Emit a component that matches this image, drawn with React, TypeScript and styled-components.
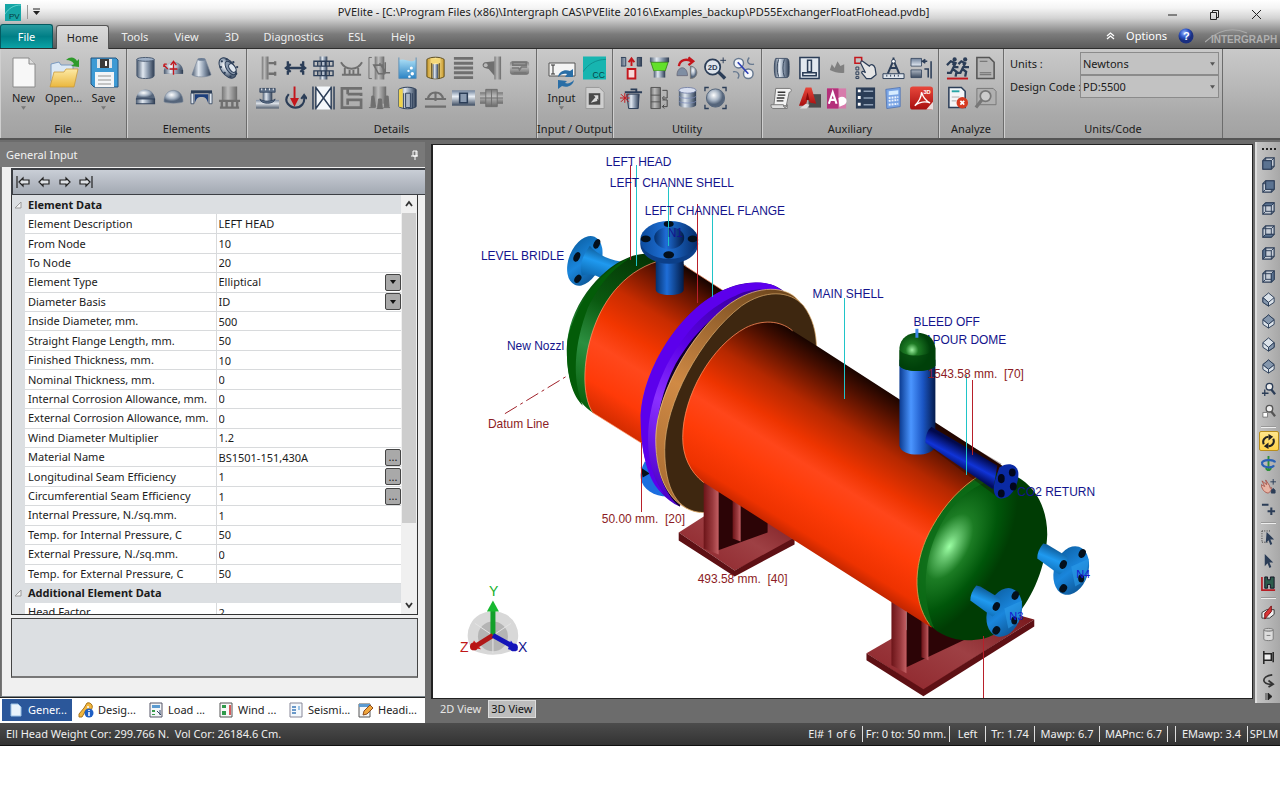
import React from "react";
import styled, { createGlobalStyle } from "styled-components";

const GlobalStyle = createGlobalStyle`
  * { box-sizing: border-box; }
  body { margin: 0; background: #fff; }
  body, button, input, select { font-family: "Noto Sans", "Open Sans", sans-serif; font-size: 11px; line-height: 16px; }
  button { padding: 0; border: 0; background: none; color: inherit; }
`;

const Window = styled.div`
  display: flex;
  flex-direction: column;
  background: #6c6c6c;
  color: #1b1b1b;
`;

/* ---------- title bar and ribbon tabs ---------- */

const Chrome = styled.header`
  background: linear-gradient(#fff 0, #f4f4f4 8px, #d4d4d4 18px, #7c7c7c 34px, #5a5a5a 100%);
  border-bottom: 1px solid #2e2e2e;
`;

const TitleBar = styled.div`
  display: grid;
  grid-template-columns: 1fr auto 1fr;
  align-items: center;
  height: 24px;
  padding: 0 18px 0 5px;
`;

const QuickAccess = styled.div`
  display: flex;
  align-items: center;
  gap: 6px;
`;

const Title = styled.h1`
  margin: 0;
  font-size: 11px;
  font-weight: 400;
  color: #222;
  white-space: nowrap;
`;

const WindowButtons = styled.div`
  display: flex;
  justify-content: flex-end;
  gap: 31px;
  padding-top: 4px;
`;

const PlainButton = styled.button`
  display: flex;
  align-items: center;
  justify-content: center;
`;

const TabBar = styled.nav`
  display: flex;
  align-items: flex-end;
  height: 24px;
`;

const FileTab = styled.button`
  width: 53px;
  height: 24px;
  border: 1px solid #055a60;
  border-bottom: 0;
  border-radius: 3px 3px 0 0;
  background: linear-gradient(#2a9ba0, #007f86 50%, #0ba3a6);
  color: #fff;
`;

const RibbonTab = styled.button<{ $active?: boolean; $width: number }>`
  width: ${(p) => p.$width}px;
  height: 24px;
  margin-left: ${(p) => (p.$active ? 3 : 0)}px;
  margin-bottom: ${(p) => (p.$active ? -1 : 0)}px;
  border: 1px solid ${(p) => (p.$active ? "#555" : "transparent")};
  border-bottom: 0;
  border-radius: 3px 3px 0 0;
  background: ${(p) => (p.$active ? "linear-gradient(#dadada, #c8c8c8)" : "none")};
  color: ${(p) => (p.$active ? "#222" : "#eee")};
`;

const TabBarEnd = styled.div`
  display: flex;
  align-items: center;
  gap: 11px;
  height: 24px;
  margin-left: auto;
  color: #fff;
`;

/* ---------- ribbon ---------- */

const Ribbon = styled.section`
  display: flex;
  height: 91px;
  background: linear-gradient(#c9c9c9, #b9b9b9 40%, #a9a9a9 75%, #a2a2a2);
  border-bottom: 2px solid #555;
`;

const Group = styled.div<{ $width: number; $pad?: number }>`
  display: flex;
  flex-direction: column;
  justify-content: space-between;
  width: ${(p) => p.$width}px;
  padding: 7px 0 1px ${(p) => p.$pad ?? 6}px;
  border-right: 1px solid #6c6c6c;
  box-shadow: inset 1px 0 0 #cfcfcf;
`;

const GroupLabel = styled.div<{ $pad?: number }>`
  margin-left: -${(p) => p.$pad ?? 6}px;
  text-align: center;
  white-space: nowrap;
`;

const IconGrid = styled.div<{ $cols: number }>`
  display: grid;
  grid-template-columns: repeat(${(p) => p.$cols}, 24px);
  gap: 6px 4px;
`;

const BigRow = styled.div`
  display: flex;
  gap: 1px;
`;

const BigButton = styled.button`
  display: flex;
  flex-direction: column;
  align-items: center;
  width: 39px;
`;

/* ---------- units / code ---------- */

const FieldGrid = styled.div`
  display: grid;
  grid-template-columns: 70px 139px;
  align-items: center;
  margin-top: -4px;
  white-space: nowrap;
`;

const SelectWrap = styled.div<{ $boxed?: boolean }>`
  position: relative;
  display: flex;
  width: 100%;
  height: ${(p) => (p.$boxed ? 23 : 17)}px;
  border: ${(p) => (p.$boxed ? "1px solid #8b8b8b" : "0")};
  background: ${(p) => (p.$boxed ? "#c2c2c2" : "none")};
`;

const BareSelect = styled.select`
  appearance: none;
  width: 100%;
  height: 100%;
  padding: 0 2px;
  border: 0;
  border-radius: 0;
  background: none;
  color: inherit;
`;

const SelectArrow = styled.span<{ $button?: boolean }>`
  position: absolute;
  top: 0;
  right: 0;
  display: flex;
  align-items: center;
  justify-content: center;
  width: ${(p) => (p.$button ? 16 : 12)}px;
  height: 100%;
  border: ${(p) => (p.$button ? "1px solid #444" : "0")};
  border-radius: 2px;
  background: ${(p) => (p.$button ? "#a9a9a9" : "none")};
  pointer-events: none;
`;

/* ---------- work area ---------- */

const WorkArea = styled.main`
  display: flex;
  padding-top: 2px;
`;

const SidePanel = styled.aside`
  display: flex;
  flex-direction: column;
  flex: 0 0 425px;
`;

const PanelTitle = styled.div`
  display: flex;
  align-items: center;
  justify-content: space-between;
  height: 25px;
  padding: 0 6px;
  background: #797979;
  color: #f2f2f2;
`;

const PanelBody = styled.div`
  display: flex;
  flex-direction: column;
  margin-left: 1px;
  padding: 1px 0 18px 9px;
  background: #f0f0f0;
  border-left: 1px solid #777;
  border-bottom: 1px solid #7c868c;
`;

const NavBar = styled.div`
  display: flex;
  align-items: center;
  gap: 6px;
  height: 27px;
  padding-left: 3px;
  background: linear-gradient(#c9ced6, #a3a9b2);
  border: 1px solid #3c3f44;
  border-width: 2px 0 1px 2px;
`;

const PropertyFrame = styled.div`
  display: flex;
  height: 420px;
  margin-right: 7px;
  border: 1px solid #333;
  border-top: 0;
  overflow: hidden;
`;

const PropertyTable = styled.table`
  flex: 1;
  height: 428px;
  border-collapse: collapse;
  table-layout: fixed;
  background: #fff;
  th, td { padding: 0; height: 19px; line-height: 16px; text-align: left; font-weight: 400; white-space: nowrap; }
`;

const SectionCell = styled.th`
  && { padding-left: 3px; font-weight: 700; background: #dcdfe2; }
`;

const Gutter = styled.td`
  background: #dcdfe2;
`;

const NameCell = styled.th`
  && { padding-left: 3px; }
  border-bottom: 1px solid #d8dadc;
  border-right: 1px solid #d8dadc;
`;

const ValueCell = styled.td`
  border-bottom: 1px solid #d8dadc;
`;

const ValueRow = styled.div`
  display: flex;
  align-items: center;
`;

const ValueInput = styled.input`
  flex: 1;
  min-width: 0;
  height: 17px;
  padding: 0 2px;
  border: 0;
  background: none;
  color: inherit;
`;

const MoreButton = styled.button`
  width: 16px;
  height: 17px;
  border: 1px solid #444;
  border-radius: 2px;
  background: #a9a9a9;
  line-height: 12px;
`;

const ScrollBar = styled.div`
  display: flex;
  flex-direction: column;
  justify-content: space-between;
  width: 16px;
  background: #f0f0f0;
`;

const ScrollThumb = styled.div`
  flex: 0 0 310px;
  margin: 0 1px auto;
  background: #cdcdcd;
`;

const ScrollButton = styled(PlainButton)`
  height: 18px;
`;

const HelpBox = styled.div`
  height: 60px;
  margin: 3px 7px 0 0;
  background: #dcdfe2;
  border: 1px solid #444;
  border-bottom: 2px solid #777;
`;

const PanelTabs = styled.div`
  display: flex;
  height: 26px;
  padding: 1px 3px 2px 2px;
  background: #fff;
  border-top: 1px solid #222;
`;

const PanelTab = styled.button<{ $active?: boolean }>`
  display: flex;
  flex: 1;
  align-items: center;
  gap: 4px;
  padding-left: 6px;
  background: ${(p) => (p.$active ? "#2b579a" : "none")};
  color: ${(p) => (p.$active ? "#fff" : "#222")};
  white-space: nowrap;
`;

const ViewPanel = styled.section`
  flex: 1;
  min-width: 0;
  margin: 0 2px 0 6px;
  padding-top: 2px;
`;

const Canvas = styled.div`
  background: #fff;
  border: 1px solid #222;
  border-left-width: 2px;
  svg { display: block; width: 100%; height: auto; }
`;

const ViewTabs = styled.div`
  display: flex;
  padding: 0 2px;
`;

const ViewTab = styled.button<{ $active?: boolean }>`
  height: 18px;
  padding: 0 2px;
  margin: 1px 0 0 4px;
  border: 1px solid ${(p) => (p.$active ? "#ddd" : "transparent")};
  background: ${(p) => (p.$active ? "#bdbdbd" : "none")};
  color: ${(p) => (p.$active ? "#111" : "#e6e6e6")};
`;

const ToolStrip = styled.aside`
  display: flex;
  flex-direction: column;
  align-items: center;
  justify-content: space-between;
  width: 25px;
  margin-bottom: 20px;
  padding: 6px 0 3px;
  background: linear-gradient(90deg, #c4c4c4, #a8a8a8);
  border-left: 2px solid #ddd;
`;

const ToolButton = styled.button<{ $active?: boolean }>`
  display: flex;
  align-items: center;
  justify-content: center;
  width: 20px;
  height: 20px;
  border: 1px solid ${(p) => (p.$active ? "#b98e1c" : "transparent")};
  border-radius: 2px;
  background: ${(p) => (p.$active ? "linear-gradient(#ffe58a, #ffd34a)" : "none")};
`;

const ToolRule = styled.hr`
  width: 15px;
  margin: 1px 0;
  border: 0;
  border-top: 1px solid #999;
  border-bottom: 1px solid #eee;
`;

const StatusBar = styled.footer`
  display: flex;
  align-items: center;
  justify-content: space-between;
  height: 23px;
  padding-left: 6px;
  background: linear-gradient(#4c4c4c, #333);
  border-bottom: 1px solid #111;
  color: #f0f0f0;
`;

const StatusItems = styled.div`
  display: flex;
`;

const StatusItem = styled.span<{ $width: number }>`
  width: ${(p) => p.$width}px;
  height: 16px;
  border-left: 1px solid #ddd;
  text-align: center;
  white-space: nowrap;
  &:first-child { border-left: 0; }
`;

/* ---------- icons ---------- */

const N = "#2b3d57";
const G = "#6f6f6f";

const Defs = () => (
  <svg width="0" height="0" style={{ position: "absolute" }} aria-hidden="true">
    <defs>
      <linearGradient id="steel"><stop offset="0" stopColor="#4a5a70" /><stop offset=".35" stopColor="#e2e9f1" /><stop offset=".65" stopColor="#8998ac" /><stop offset="1" stopColor="#2d3b50" /></linearGradient>
      <linearGradient id="gray"><stop offset="0" stopColor="#767676" /><stop offset=".4" stopColor="#bdbdbd" /><stop offset="1" stopColor="#6a6a6a" /></linearGradient>
      <linearGradient id="grayV" x2="0" y2="1"><stop offset="0" stopColor="#777" /><stop offset=".4" stopColor="#bbb" /><stop offset="1" stopColor="#6a6a6a" /></linearGradient>
      <linearGradient id="steelV" x2="0" y2="1"><stop offset="0" stopColor="#70829b" /><stop offset=".4" stopColor="#e8eef5" /><stop offset="1" stopColor="#3c4b60" /></linearGradient>
      <linearGradient id="gold"><stop offset="0" stopColor="#c99a2c" /><stop offset=".5" stopColor="#fff0b0" /><stop offset="1" stopColor="#c99a2c" /></linearGradient>
      <linearGradient id="water" x2="0" y2="1"><stop offset="0" stopColor="#a8dcf4" /><stop offset="1" stopColor="#2a83c4" /></linearGradient>
      <linearGradient id="red" x2="0" y2="1"><stop offset="0" stopColor="#e8473b" /><stop offset="1" stopColor="#a80f0f" /></linearGradient>
      <linearGradient id="folder" x2="0" y2="1"><stop offset="0" stopColor="#fdeaa6" /><stop offset="1" stopColor="#eab73e" /></linearGradient>
      <radialGradient id="ball" cx=".4" cy=".35"><stop offset="0" stopColor="#fff" /><stop offset=".6" stopColor="#a5b2c2" /><stop offset="1" stopColor="#55657b" /></radialGradient>
      <radialGradient id="help" cx=".4" cy=".3"><stop offset="0" stopColor="#9db8ff" /><stop offset=".6" stopColor="#2d55c8" /><stop offset="1" stopColor="#1a2f80" /></radialGradient>
    </defs>
  </svg>
);

const icons: Record<string, React.ReactNode> = {
  Cylinder: <><path d="M3 3v17c0 4 18 4 18 0V3z" fill="url(#steel)" stroke="#4a5a70" /><ellipse cx="12" cy="3" rx="9" ry="2" fill="#9fb0c6" stroke="#4a5a70" /></>,
  "Flip element": <><path d="M2 18v-4C4 3 20 3 22 14v4z" fill="url(#ball)" /><path d="M2 14h20v4H2z" fill="url(#steel)" /><path d="M12 19V7M9 9l3-4 3 4M2 9l4 4M2 8h3M2 8v3M8 13h8" stroke="#c4161c" strokeWidth="1.4" fill="none" /></>,
  Cone: <><path d="M8 3h8l6 16c-3 3-17 3-20 0z" fill="url(#steel)" stroke="#7b899c" strokeWidth=".7" /><ellipse cx="12" cy="3" rx="4" ry="1.5" fill="#6c7d94" /></>,
  "Body flange": <><ellipse cx="10" cy="12" rx="7" ry="12" transform="rotate(-35 10 12)" fill="url(#ball)" stroke={N} /><ellipse cx="13" cy="12" rx="4" ry="8" transform="rotate(-35 13 12)" fill="#8797ac" stroke={N} /><ellipse cx="15" cy="12" rx="3" ry="5" transform="rotate(-35 15 12)" fill="#dfe6ee" stroke={N} /><g fill={N}><circle cx="4" cy="5" r="1.2" /><circle cx="9" cy="3" r="1.2" /><circle cx="16" cy="6" r="1.2" /><circle cx="20" cy="11" r="1.2" /><circle cx="19" cy="18" r="1.2" /><circle cx="13" cy="21" r="1.2" /><circle cx="7" cy="17" r="1.2" /><circle cx="3" cy="11" r="1.2" /></g></>,
  "Elliptical head": <><path d="M2 13C4 0 20 0 22 13z" fill="url(#ball)" /><path d="M2 13h20v5H2z" fill="url(#steel)" /><path d="M2 13h20M2 18h20" stroke={N} /></>,
  "Spherical head": <path d="M2 16C2 0 22 0 22 16 18 18 6 18 2 16z" fill="url(#ball)" stroke="#7d8a9a" strokeWidth=".6" />,
  "Flat head": <><path d="M1 4h22v3H1z" fill={N} /><path d="M1 7h3v11H1zM20 7h3v11h-3z" fill="#dfe6ef" stroke={N} strokeWidth=".8" /><path d="M5 18V8h14v10c-1-5-3-7-7-7s-6 2-7 7z" fill="#1d3f7c" /></>,
  "Skirt support": <><path d="M4 0h16v15H4z" fill="url(#gray)" /><path d="M1 15h22M2 22h20M4 15v8M9 15v8M15 15v8M20 15v8" stroke={G} strokeWidth="2.5" /></>,

  Ring: <><path d="M6 0h7v24H6z" fill="url(#gray)" /><path d="M13 7h8M13 18h8M20 5v4M20 16v4" stroke={G} strokeWidth="2.4" /></>,
  Platform: <path d="M4 5v14M20 5v14M2 12h20M7 8l-5 4 5 4M17 8l5 4-5 4" stroke={N} strokeWidth="2.4" fill="none" />,
  Tray: <><path d="M8 0h8v24H8z" fill="url(#steel)" /><path d="M2 5h20v5H2zM2 15h20v5H2zM6 5v5M10 5v5M14 5v5M18 5v5M6 15v5M10 15v5M14 15v5M18 15v5" stroke={N} strokeWidth="1.4" fill="none" /></>,
  Saddle: <path d="M1 6c5 9 17 9 22 0M2 19h20M5 12v7M19 12v7M10 14v5M14 14v5" stroke={G} strokeWidth="2" fill="none" />,
  Packing: <><path d="M7 0h10v24H7z" fill="url(#gray)" /><path d="M1 1v22M4 1H1M4 23H1" stroke={G} /><path d="M6 9h9l2 9h-6zM12 7l7 10h4M18 6v12" stroke={G} strokeWidth="1.6" fill="none" /></>,
  Liquid: <><path d="M3 4c6-3 11 4 18-1v20H3z" fill="url(#water)" /><path d="M3 1v22h18V1" stroke="#5f8fb4" fill="none" /><g fill="#fff"><circle cx="16" cy="12" r="1.6" /><circle cx="13" cy="15" r="1.2" /><circle cx="17" cy="18" r="1.8" /><circle cx="14" cy="21" r="1.3" /></g></>,
  Insulation: <><path d="M3 3c4-3 14-3 18 0v18c-4 3-14 3-18 0z" fill="url(#gold)" stroke="#5a4a1c" /><path d="M7 2h10v5H7z" fill="#f4d878" /><path d="M9 8h6v15H9z" fill="url(#steel)" /><path d="M8 7v16M16 7v16" stroke="#5a4a1c" /></>,
  Weight: <path d="M2 2h20M2 7h20M2 12h20M2 17h20M2 22h20" stroke={G} strokeWidth="3" />,
  Lug: <><path d="M15 0h7v24h-7z" fill="url(#gray)" /><path d="M15 5L5 6c-3 1-3 5 0 6l4 1 6 7z" fill={G} /><circle cx="6" cy="9" r="2" fill="#bbb" /></>,
  "Half pipe": <><rect x="2" y="5" width="20" height="14" rx="3" fill="url(#grayV)" /><path d="M5 6h14v3H5zM4 12h7l1 2 2-3h6M6 17h13" stroke="#777" fill="none" strokeWidth="1.6" /></>,
  Nozzle: <><path d="M0 14h24v9H0z" fill="url(#steelV)" opacity=".8" /><path d="M7 3h10v13H7z" fill="url(#steel)" /><path d="M4 2h16v4H4zM4 13c1 6 15 6 16 0-3 3-13 3-16 0z" fill="#5c6e86" stroke={N} strokeWidth=".8" /><path d="M6 2v2M10 2v2M14 2v2M18 2v2" stroke="#fff" /></>,
  "Force moment": <><path d="M5 8c-7 8 2 14 7 14 6 0 10-5 9-11M18 13l3-4 3 4" fill="none" stroke={N} strokeWidth="2.2" /><path d="M11 0v16M8 13l3 6 3-6z" stroke="#c4161c" fill="#c4161c" strokeWidth="2" /></>,
  "Tube sheet": <><path d="M4 0h16v24H4z" fill="#f5f8fb" /><path d="M1 0v24M4 0v24M20 0v24M23 0v24M4 1l16 22M20 1L4 23" stroke={N} strokeWidth="1.5" /></>,
  Coil: <path d="M23 2H2v20h20v-8H8v5M8 8h14v2M8 2v6M8 14v3" stroke={G} strokeWidth="2.8" fill="none" />,
  Legs: <><path d="M5 0h14v18H5z" fill="url(#gray)" /><path d="M4 10h2l2 11H3zM11 13h3l1 10h-5zM18 10h3l1 11h-5zM1 22h7M9 23h7M16 22h7" fill={G} stroke={G} /></>,
  Lining: <><path d="M3 3c4-3 14-3 18 0v18c-4 3-14 3-18 0z" fill="url(#steel)" stroke={N} /><path d="M3 3l4-1v20l-4-1z" fill="#efd34c" /><path d="M10 7h5v15h-5zM8 7v16M17 7v16" fill="#aab6c6" stroke={N} /></>,
  Clip: <path d="M1 13h22M1 21h22M4 13c2-9 14-9 16 0M12 6v9" stroke={G} strokeWidth="2.2" fill="none" />,
  "Stiffener plate": <><path d="M0 4h24v16H0z" fill="url(#steelV)" /><path d="M8 7h8v10H8z" fill="#8b9bb0" stroke={N} strokeWidth="1.6" /></>,
  Appurtenance: <><path d="M0 6h24v12H0z" fill="url(#grayV)" /><path d="M6 3h12v18H6z" fill="url(#grayV)" stroke={G} /><path d="M0 12h24M12 3v18" stroke={G} /></>,

  "Component analysis": <><path d="M0 0h24v24H0z" fill="#17b5b0" /><path d="M0 16C5 8 14 3 24 3" stroke="#0f8f8e" fill="none" /><text x="10" y="22" fontSize="9" fontFamily="Liberation Sans, sans-serif" fill="#06474a">CC</text></>,
  "Export file": <><path d="M3 1h14l5 5v17H3z" fill="#cfcfcf" stroke="#999" /><path d="M6 7h12v12H6z" fill="#4a4a4a" /><path d="M8 17l6-7 1 5zM11 9h5v5" fill="#ddd" /></>,

  "Insert element": <><path d="M1 1h5v9H1M23 1h-5v9h5" fill="url(#steel)" stroke={N} /><path d="M8 13h8v10H8z" fill="#f7d9d9" stroke="#c4161c" strokeWidth="2" /><path d="M12 10V3M9 6l3-4 3 4" stroke="#c4161c" strokeWidth="2" fill="none" /></>,
  "Select material": <><path d="M2 1h20v5H2z" fill="url(#steel)" /><path d="M3 6h18l-3 9H6z" fill="#63e02a" stroke="#2c7a0d" strokeWidth=".8" /><path d="M6 15h12v7H6z" fill="url(#steel)" /></>,
  "Rotate head": <><path d="M1 20C1 9 12 9 12 20z" fill="#7f8ea3" stroke="#667" strokeWidth=".8" /><path d="M15 10c9 1 9 13 0 13z" fill="url(#ball)" stroke="#777" /><path d="M3 10c1-7 8-8 13-5M13 1l5 4-5 4" fill="none" stroke="#c4161c" strokeWidth="2.4" /></>,
  "Zoom 2D": <><circle cx="9" cy="11" r="8" fill="#dfe5ec" stroke={N} strokeWidth="1.8" /><path d="M15 16l7 7" stroke={N} strokeWidth="3.5" /><path d="M20 1v6M17 4h6" stroke={N} /><text x="4" y="14" fontSize="8" fontWeight="700" fontFamily="Liberation Sans, sans-serif" fill={N}>2D</text></>,
  "Flip orientation": <><circle cx="7" cy="7" r="5" fill="#f4f6fa" stroke="#66788f" strokeWidth="1.5" /><circle cx="17" cy="18" r="5" fill="#f4f6fa" stroke="#66788f" strokeWidth="1.5" /><path d="M6 6l11 12" stroke="#2d3fb4" strokeWidth="1.8" /><path d="M18 1c-4 5 0 8 5 7M1 16c5-1 8 3 5 7" stroke="#66788f" strokeWidth="1.4" fill="none" /></>,
  Delete: <><path d="M7 8h13l-1 15H9z" fill="url(#steel)" stroke={N} /><path d="M5 6h18M11 3h6v3" stroke={N} strokeWidth="2" fill="none" /><path d="M1 8l8 8M9 8l-8 8M5 7v10M0 12h10" stroke="#c4161c" /></>,
  "Share lines": <><path d="M3 1h10v22H3zM3 9h10M3 16h10" fill="url(#gray)" stroke="#555" /><path d="M15 4h5v8h-4M15 14h5v7h-5M17 10l-2 2 2 2M17 19l-2 2 2 2" stroke="#444" fill="none" /></>,
  "Tank list": <><path d="M3 4v15c0 4 18 4 18 0V4z" fill="url(#steel)" /><ellipse cx="12" cy="4" rx="9" ry="3" fill="#d8dff0" stroke="#6876a0" strokeWidth=".8" /><path d="M3 10c0 3 18 3 18 0M3 15c0 3 18 3 18 0" stroke="#7e8cb8" fill="none" strokeWidth=".8" /></>,
  "Zoom extents": <><circle cx="12" cy="12" r="9.5" fill="url(#ball)" stroke="#55657b" /><path d="M1 5V1h4M19 1h4v4M23 19v4h-4M5 23H1v-4" stroke={N} strokeWidth="1.4" fill="none" /></>,

  "Vessel list": <><path d="M6 2h11c3 0 3 3 3 10s0 10-3 10H6c-2-3-2-17 0-20z" fill="url(#steel)" stroke={N} strokeWidth=".8" /><path d="M9 3c-2 5-2 13 0 18M15 3c-2 5-2 13 0 18" stroke="#34445a" fill="none" /></>,
  "Foundation": <path d="M2 1h20v22H2zM10 4h4v12h-4zM5 17h14v3H5z" fill="#e2e8ef" stroke={N} strokeWidth="1.6" />,
  "Wind profile": <path d="M4 14l2-6 3 4 3-7 3 5 4-2v9c-5 1-10-1-15-3z" fill="#808080" />,
  "Set options": <><path d="M1 1h7v6H1z" fill="none" stroke="#c4161c" strokeWidth="1.6" /><path d="M2 11h3v3H2zM2 16h3v3H2zM2 21h3v2H2z" fill="none" stroke={N} /><path d="M9 5l7 5c2-3 5-1 6 2l1 7-5 4h-5l-5-6c0-2 2-2 4 0l-5-10c0-2 1-3 2-2z" fill="#e5e5e5" stroke={N} strokeWidth="1.3" /></>,
  Dimensions: <><path d="M12 1v4M12 4L6 18M12 4l6 14M8 12h8" stroke={N} strokeWidth="2" fill="none" /><circle cx="12" cy="5" r="2" fill="#fff" stroke={N} /><path d="M1 18h22v5H1z" fill="#dfe5ec" stroke={N} /><path d="M5 19v2M9 19v2M13 19v2M17 19v2" stroke={N} /></>,
  "Match shells": <><path d="M1 2h11v8H1zM1 14h11v8H1z" fill="url(#steelV)" stroke={N} strokeWidth=".8" /><path d="M16 3l-3 2 3 2M13 5h5M15 13h4v9M22 5v18" fill="none" stroke={N} strokeWidth="1.6" /></>,
  "Report scroll": <><path d="M6 2h14c3 0 3 4 0 4l-3 14H4z" fill="#f3f3f3" stroke="#777" /><path d="M1 19h13c0 4 3 4 4 0v4H3c-2 0-2-4-2-4z" fill="#ddd" stroke="#777" /><path d="M8 6h8M8 9h8M7 12h8M7 15h7" stroke="#333" strokeWidth="1.4" /></>,
  "CAD export": <><path d="M11 8h13v14H11z" fill="#4c4c4c" /><path d="M1 20L8 1h6l5 17-6-1-3-4-2 7z" fill="url(#red)" /><path d="M10 6l2 8H8z" fill="#8a0c0c" /><path d="M2 23l6-5 4 1-3 4z" fill="#ddd" /></>,
  "Database export": <><path d="M1 2h20v21H1z" fill="#d77bab" /><path d="M1 2h12v21H1z" fill="#b4307a" /><path d="M3 18l4-12 4 12M4 14h5" stroke="#fff" strokeWidth="2.2" fill="none" /><path d="M13 12c6-4 12 3 6 7l-5 2z" fill="#fff" /></>,
  "Property list": <><path d="M2 1h20v22H2z" fill={N} /><path d="M10 5h10M10 12h10M10 19h10" stroke="#8fa0b5" strokeWidth="1.4" /><path d="M4 3h3v3H4zM4 10h3v3H4zM4 17h3v3H4z" fill="#fff" /></>,
  Calculator: <><path d="M4 3l15-2v20L5 23z" fill="#7aa4e4" stroke="#4a6fb0" strokeWidth=".8" /><path d="M7 5l10-1v4L7 9z" fill="#d7ecff" /><path d="M7 12l10-1M7 15l10-1M7 19l10-1" stroke="#eef5ff" strokeWidth="2" strokeDasharray="2 1" /></>,
  "3D PDF": <><rect x="0" y="0" width="24" height="24" rx="3" fill="url(#red)" /><path d="M5 20c5-5 7-10 7-14 2 6 4 9 9 11-6-2-11-1-16 3z" fill="none" stroke="#fff" strokeWidth="1.4" /><path d="M24 16l-7 8h7z" fill="#eadcdc" /><text x="14" y="8" fontSize="6" fontWeight="700" fontFamily="Liberation Sans, sans-serif" fill="#fff">3D</text></>,

  Analyze: <><g stroke={N} strokeWidth="2.4" fill="none"><path d="M1 9l4-4 5 2-3 6 4 3-1 5M7 13l-2 4H1M7 7l3 4h3M13 8l3-3 4 2-3 6 4 3-1 5M17 13l-2 4h-4M18 7l2 4h4" /></g><circle cx="9" cy="3" r="2.2" fill={N} /><circle cx="20" cy="3" r="2.2" fill={N} /><path d="M1 23h22" stroke="#c4161c" strokeWidth="2" /></>,
  "Report page": <><path d="M3 1h13l5 5v17H3z" fill="#b5b5b5" stroke="#555" strokeWidth="1.6" /><path d="M6 5h8M6 19h12M6 17h12" stroke="#666" /></>,
  "Error report": <><path d="M3 1h13l4 4v17H3z" fill="#f3f6f8" stroke={N} strokeWidth="1.6" /><path d="M6 5h8" stroke="#29a6a6" strokeWidth="2" /><path d="M6 11h8M6 15h5" stroke="#aaa" /><circle cx="17" cy="17" r="6" fill="#d63a20" /><path d="M15 15l4 4M19 15l-4 4" stroke="#fff" strokeWidth="1.8" /></>,
  "Review report": <><path d="M3 2h17l3 3v14H3z" fill="#b0b0b0" stroke="#777" /><circle cx="12" cy="10" r="5.5" fill="#ccc" stroke="#777" strokeWidth="1.8" /><path d="M8 14l-6 8" stroke="#777" strokeWidth="3.4" /></>,
};

const IconButton = ({ name }: { name: string }) => (
  <PlainButton aria-label={name}>
    <svg width="23" height="24" viewBox="0 0 24 24" aria-hidden="true">{icons[name]}</svg>
  </PlainButton>
);

const Down = ({ c = "#555", w = 5 }: { c?: string; w?: number }) => (
  <svg width={w} height="4" viewBox="0 0 6 4" aria-hidden="true"><path d="M0 0h6L3 4z" fill={c} /></svg>
);

const IconGroup = ({ label, width, pad, cols, names }: { label: string; width: number; pad?: number; cols: number; names: string[] }) => (
  <Group $width={width} $pad={pad}>
    <IconGrid $cols={cols}>{names.map((n) => <IconButton key={n} name={n} />)}</IconGrid>
    <GroupLabel $pad={pad}>{label}</GroupLabel>
  </Group>
);

const NewIcon = () => (
  <svg width="32" height="34" viewBox="0 0 32 34" aria-hidden="true"><path d="M5 2h16l6 6v23H5z" fill="#f7f7f7" stroke="#8a8a8a" /><path d="M21 2v6h6" fill="#ddd" stroke="#8a8a8a" /></svg>
);
const OpenIcon = () => (
  <svg width="32" height="34" viewBox="0 0 32 34" aria-hidden="true"><path d="M3 8l8-2 2 3h12v16H3z" fill="#dbe8f4" stroke="#7a9ac0" /><path d="M2 31l4-15h10l2-3h12l-4 18z" fill="url(#folder)" stroke="#c99a3c" strokeWidth=".8" /><path d="M18 4c4-4 9-3 11 1l2-2v8l-8-1 3-2c-2-3-4-4-8-4z" fill="#2f9a2a" /></svg>
);
const SaveIcon = () => (
  <svg width="32" height="34" viewBox="0 0 32 34" aria-hidden="true"><path d="M3 2h25l2 2v27H6l-3-3z" fill="#3e9ad4" stroke="#24557e" /><path d="M9 3h15v9H9z" fill="#dfe4ea" /><path d="M12 3h9v9h-9z" fill="#3b3b3b" /><path d="M17 5h2v5h-2z" fill="#fff" /><path d="M7 16h19v15H7z" fill="#f3f5f7" /><path d="M10 20h13M10 24h13M10 28h13" stroke="#b4b4b4" strokeWidth="1.4" /></svg>
);
const InputIcon = () => (
  <svg width="32" height="34" viewBox="0 0 32 34" aria-hidden="true"><path d="M3 7h26v13H3z" fill="#f4f4f4" stroke="#555" /><path d="M5 9h4M7 9v9M5 18h4" stroke="#333" /><path d="M12 21c1-6 7-8 12-6l3-2v8h-8l2-3c-3-1-6 0-9 3zM28 24c-1 6-7 8-12 6l-4 3v-9l9 1-2 2c3 1 6 0 9-3z" fill="#2a6ea6" /></svg>
);

const Home = () => (
  <Ribbon>
    <Group $width={127} $pad={4}>
      <BigRow>
        <BigButton><NewIcon />New<Down c="#777" /></BigButton>
        <BigButton><OpenIcon />Open...</BigButton>
        <BigButton><SaveIcon />Save<Down c="#777" /></BigButton>
      </BigRow>
      <GroupLabel $pad={4}>File</GroupLabel>
    </Group>
    <IconGroup label="Elements" width={120} cols={4} names={["Cylinder", "Flip element", "Cone", "Body flange", "Elliptical head", "Spherical head", "Flat head", "Skirt support"]} />
    <IconGroup label="Details" width={290} pad={8} cols={10} names={["Ring", "Platform", "Tray", "Saddle", "Packing", "Liquid", "Insulation", "Weight", "Lug", "Half pipe", "Nozzle", "Force moment", "Tube sheet", "Coil", "Legs", "Lining", "Clip", "Stiffener plate", "Appurtenance"]} />
    <Group $width={76} $pad={5}>
      <BigRow>
        <BigButton><InputIcon />Input<Down c="#777" /></BigButton>
        <IconGrid $cols={1}><IconButton name="Component analysis" /><IconButton name="Export file" /></IconGrid>
      </BigRow>
      <GroupLabel $pad={5}>Input / Output</GroupLabel>
    </Group>
    <IconGroup label="Utility" width={149} cols={5} names={["Insert element", "Select material", "Rotate head", "Zoom 2D", "Flip orientation", "Delete", "Share lines", "Tank list", "Zoom extents"]} />
    <IconGroup label="Auxiliary" width={177} pad={7} cols={6} names={["Vessel list", "Foundation", "Wind profile", "Set options", "Dimensions", "Match shells", "Report scroll", "CAD export", "Database export", "Property list", "Calculator", "3D PDF"]} />
    <IconGroup label="Analyze" width={65} cols={2} names={["Analyze", "Report page", "Error report", "Review report"]} />
    <Group $width={219}>
      <FieldGrid>
        <label htmlFor="units">Units :</label>
        <SelectWrap $boxed>
          <BareSelect id="units"><option>Newtons</option></BareSelect>
          <SelectArrow><Down /></SelectArrow>
        </SelectWrap>
        <label htmlFor="code">Design Code :</label>
        <SelectWrap $boxed>
          <BareSelect id="code"><option>PD:5500</option></BareSelect>
          <SelectArrow><Down /></SelectArrow>
        </SelectWrap>
      </FieldGrid>
      <GroupLabel>Units/Code</GroupLabel>
    </Group>
  </Ribbon>
);

/* ---------- property grid ---------- */

type Prop = { name: string; value: string; kind?: "select" | "more" };

const elementData: Prop[] = [
  { name: "Element Description", value: "LEFT HEAD" },
  { name: "From Node", value: "10" },
  { name: "To Node", value: "20" },
  { name: "Element Type", value: "Elliptical", kind: "select" },
  { name: "Diameter Basis", value: "ID", kind: "select" },
  { name: "Inside Diameter, mm.", value: "500" },
  { name: "Straight Flange Length, mm.", value: "50" },
  { name: "Finished Thickness, mm.", value: "10" },
  { name: "Nominal Thickness, mm.", value: "0" },
  { name: "Internal Corrosion Allowance, mm.", value: "0" },
  { name: "External Corrosion Allowance, mm.", value: "0" },
  { name: "Wind Diameter Multiplier", value: "1.2" },
  { name: "Material Name", value: "BS1501-151,430A", kind: "more" },
  { name: "Longitudinal Seam Efficiency", value: "1", kind: "more" },
  { name: "Circumferential Seam Efficiency", value: "1", kind: "more" },
  { name: "Internal Pressure, N./sq.mm.", value: "1" },
  { name: "Temp. for Internal Pressure, C", value: "50" },
  { name: "External Pressure, N./sq.mm.", value: "0" },
  { name: "Temp. for External Pressure, C", value: "50" },
];

const Twisty = () => (
  <svg width="13" height="9" viewBox="0 0 13 9" aria-hidden="true"><path d="M3 8h6V2z" fill="#f4f4f4" stroke="#999" /></svg>
);

const PropRow = ({ name, value, kind }: Prop) => (
  <tr>
    <Gutter />
    <NameCell scope="row">{name}</NameCell>
    <ValueCell>
      {kind === "select" ? (
        <SelectWrap>
          <BareSelect aria-label={name}><option>{value}</option></BareSelect>
          <SelectArrow $button><Down c="#111" w={6} /></SelectArrow>
        </SelectWrap>
      ) : (
        <ValueRow>
          <ValueInput aria-label={name} defaultValue={value} />
          {kind === "more" && <MoreButton aria-label={`Browse ${name}`}>...</MoreButton>}
        </ValueRow>
      )}
    </ValueCell>
  </tr>
);

const SectionRow = ({ title }: { title: string }) => (
  <tr><Gutter><Twisty /></Gutter><SectionCell colSpan={2} scope="colgroup">{title}</SectionCell></tr>
);

const navShapes: [string, string][] = [
  ["First", "M1 1v12M3 7l4-4v2h6v4H7v2z"],
  ["Previous", "M2 7l4-4v2h6v4H6v2z"],
  ["Next", "M12 7L8 3v2H2v4h6v2z"],
  ["Last", "M13 1v12M11 7L7 3v2H1v4h6v2z"],
];

const Chevron = ({ d }: { d: string }) => (
  <svg width="9" height="9" viewBox="0 0 9 9" aria-hidden="true"><path d={d} fill="none" stroke="#333" strokeWidth="1.8" /></svg>
);

const tabIcons = [
  <path d="M3 2h7l3 3v9H3z" fill="#e8f2fb" stroke="#9cc3e6" />,
  <><path d="M9 1a4 4 0 1 1-1 7L4 15H1v-3l5-6z" fill="#f2b63c" stroke="#a8741a" /><circle cx="10" cy="5" r="1" fill="#fff" /><circle cx="11" cy="11" r="4.500" fill="#1f5fc4" /><path d="M11 10v4M11 8v1" stroke="#fff" strokeWidth="1.5" /></>,
  <><path d="M2 1h12v14H2z" fill="#f4f6f8" stroke="#556" /><path d="M4 3h8v3H4z" fill="#5b9ad0" /><path d="M4 8h3v2H4zM4 12h3v1H4z" fill="#3a9a4a" /><path d="M9 9l4 4M12 8v5" stroke="#346" /></>,
  <><path d="M2 1h12v14H2z" fill="#f8f8f8" stroke="#555" /><path d="M4 3h4v3H4zM4 9h4v4H4z" fill="#2f9a4a" /><path d="M12 3v10" stroke="#c33" strokeWidth="1.6" /></>,
  <><path d="M2 1h12v14H2z" fill="#f4f8fc" stroke="#889" /><path d="M4 5h4M4 8h4M4 11h4" stroke="#3b78b8" strokeWidth="1.6" /><path d="M10 4h2v4h-2z" fill="#9cc3e6" /></>,
  <><path d="M1 2h11v13H1z" fill="#f4f6f8" stroke="#555" /><path d="M1 2h11v3H1z" fill="#5b9ad0" /><path d="M5 13l1-4 6-6 3 3-6 6z" fill="#f0a63c" stroke="#8c4a1a" /></>,
];

const GeneralInput = () => (
  <SidePanel>
    <PanelTitle>
      General Input
      <PlainButton aria-label="Pin panel">
        <svg width="9" height="10" viewBox="0 0 9 10"><path d="M3 1h4v5H3zM1 6h7M5 6v4M6 1v5" stroke="#fff" fill="none" /></svg>
      </PlainButton>
    </PanelTitle>
    <PanelBody>
      <NavBar>
        {navShapes.map(([n, d]) => (
          <PlainButton key={n} aria-label={n}>
            <svg width="15" height="14" viewBox="0 0 15 14"><path d={d} fill="#dfe2e6" stroke="#222" strokeWidth="1.2" /></svg>
          </PlainButton>
        ))}
      </NavBar>
      <PropertyFrame>
        <PropertyTable>
          <colgroup><col width="13" /><col width="191" /><col /></colgroup>
          <tbody>
            <SectionRow title="Element Data" />
            {elementData.map((p) => <PropRow key={p.name} {...p} />)}
            <SectionRow title="Additional Element Data" />
            <PropRow name="Head Factor" value="2" />
          </tbody>
        </PropertyTable>
        <ScrollBar>
          <ScrollButton aria-label="Scroll up"><Chevron d="M1 6l3-4 3 4" /></ScrollButton>
          <ScrollThumb />
          <ScrollButton aria-label="Scroll down"><Chevron d="M1 2l3 4 3-4" /></ScrollButton>
        </ScrollBar>
      </PropertyFrame>
      <HelpBox />
    </PanelBody>
    <PanelTabs>
      {["Gener...", "Desig...", "Load ...", "Wind ...", "Seismi...", "Headi..."].map((t, i) => (
        <PanelTab key={t} $active={i === 0}>
          <svg width="16" height="16" viewBox="0 0 16 16" aria-hidden="true">{tabIcons[i]}</svg>
          {t}
        </PanelTab>
      ))}
    </PanelTabs>
  </SidePanel>
);

/* ---------- 3D scene ---------- */

const Flange = ({ x, y, label }: { x: number; y: number; label: string }) => (
  <g transform={`translate(${x} ${y})`}>
    <ellipse cx="0" cy="0" rx="17" ry="25" transform="rotate(18)" fill="url(#flangeN)" />
    <path d="M-28-27Q-34-20-34-12L-12 4Q-6 2-4-14L-24-26Z" fill="url(#pipeN)" />
    <path d="M0-4L18-12 14 10 4 16Z" fill="#2b9be8" opacity=".6" />
    <g fill="#04101c"><ellipse cx="-8" cy="-6" rx="3.4" ry="4.600" transform="rotate(25 -8 -6)" /><ellipse cx="11" cy="-17" rx="3.4" ry="4.600" transform="rotate(25 11 -17)" /><ellipse cx="-8" cy="18" rx="3.600" ry="4.400" transform="rotate(35 -8 18)" /><ellipse cx="10" cy="8" rx="3" ry="4" /></g>
    <text x="5" y="8" fill="#1717d0" fontSize="11">{label}</text>
  </g>
);

const Lines = ({ c, d }: { c: string; d: string }) => <path d={d} stroke={c} fill="none" shapeRendering="crispEdges" />;

const Scene = () => (
  <svg viewBox="433 145 820 554" role="img" aria-label="3D view of the exchanger" fontFamily="Liberation Sans, Arial, sans-serif" fontSize="12">
    <defs>
      <linearGradient id="shell" gradientUnits="userSpaceOnUse" x1="817" y1="346" x2="723" y2="497">
        <stop offset="0" stopColor="#180400" /><stop offset=".1" stopColor="#4a0f00" /><stop offset=".3" stopColor="#b52800" /><stop offset=".48" stopColor="#ee3400" /><stop offset=".6" stopColor="#ff461a" /><stop offset=".75" stopColor="#ff3c08" /><stop offset=".93" stopColor="#ee3200" /><stop offset="1" stopColor="#c42600" />
      </linearGradient>
      <linearGradient id="channel" gradientUnits="userSpaceOnUse" x1="700" y1="277" x2="610" y2="423">
        <stop offset="0" stopColor="#180400" /><stop offset=".12" stopColor="#661400" /><stop offset=".32" stopColor="#c82c00" /><stop offset=".5" stopColor="#f23600" /><stop offset=".65" stopColor="#ff481c" /><stop offset=".85" stopColor="#ff3a08" /><stop offset="1" stopColor="#d42c00" />
      </linearGradient>
      <linearGradient id="headL" gradientUnits="userSpaceOnUse" x1="660" y1="255" x2="580" y2="410"><stop offset="0" stopColor="#033003" /><stop offset=".4" stopColor="#0a5a10" /><stop offset=".65" stopColor="#2c8f40" /><stop offset="1" stopColor="#035c08" /></linearGradient>
      <linearGradient id="purple" gradientUnits="userSpaceOnUse" x1="770" y1="285" x2="650" y2="490"><stop offset="0" stopColor="#33008c" /><stop offset=".4" stopColor="#5a00e6" /><stop offset=".65" stopColor="#8a30ff" /><stop offset="1" stopColor="#4c00c8" /></linearGradient>
      <linearGradient id="tan" gradientUnits="userSpaceOnUse" x1="780" y1="290" x2="665" y2="500"><stop offset="0" stopColor="#70481e" /><stop offset=".55" stopColor="#d08a45" /><stop offset="1" stopColor="#a86c32" /></linearGradient>
      <radialGradient id="dome" gradientUnits="userSpaceOnUse" cx="0" cy="0" r="1" gradientTransform="translate(950 547) rotate(-60) scale(104 52)"><stop offset="0" stopColor="#9cffa4" /><stop offset=".12" stopColor="#6cca74" /><stop offset=".35" stopColor="#1c7c24" /><stop offset=".7" stopColor="#00560a" /><stop offset="1" stopColor="#003c04" /></radialGradient>
      <linearGradient id="column"><stop offset="0" stopColor="#0a3a90" /><stop offset=".32" stopColor="#4b96ff" /><stop offset=".65" stopColor="#1b56c4" /><stop offset="1" stopColor="#041a4c" /></linearGradient>
      <linearGradient id="stub"><stop offset="0" stopColor="#04306c" /><stop offset=".4" stopColor="#1f6ed8" /><stop offset="1" stopColor="#021c48" /></linearGradient>
      <linearGradient id="pipe" gradientUnits="userSpaceOnUse" x1="965" y1="448" x2="955" y2="467"><stop offset="0" stopColor="#02094c" /><stop offset=".55" stopColor="#1034d8" /><stop offset="1" stopColor="#020c60" /></linearGradient>
      <linearGradient id="pipeN" x1=".7" y1="0" x2=".3" y2="1"><stop offset="0" stopColor="#063e70" /><stop offset=".5" stopColor="#1f9af0" /><stop offset="1" stopColor="#0b62a8" /></linearGradient>
      <linearGradient id="flangeN" x1="0" y1="0" x2="1" y2="1"><stop offset="0" stopColor="#0a5a9c" /><stop offset=".5" stopColor="#1a86dc" /><stop offset="1" stopColor="#0a4a84" /></linearGradient>
      <linearGradient id="flangeT"><stop offset="0" stopColor="#0b4a9c" /><stop offset=".45" stopColor="#1f72d8" /><stop offset="1" stopColor="#052a66" /></linearGradient>
      <linearGradient id="plate" x1="0" y1="1" x2="1" y2="0"><stop offset="0" stopColor="#8c2228" /><stop offset=".5" stopColor="#9e4044" /><stop offset="1" stopColor="#701014" /></linearGradient>
      <linearGradient id="post"><stop offset="0" stopColor="#6c1418" /><stop offset=".6" stopColor="#9a3a3e" /><stop offset="1" stopColor="#c46064" /></linearGradient>
      <radialGradient id="cap" cx=".35" cy=".45"><stop offset="0" stopColor="#9cf0a0" /><stop offset=".35" stopColor="#1d7a24" /><stop offset="1" stopColor="#00400a" /></radialGradient>
    </defs>

    {/* saddle base plates and the right saddle */}
    <path d="M679 533L740 494 795 541 735 571Z" fill="url(#plate)" />
    <path d="M679 533L735 571 795 538V545L735 577 679 541Z" fill="#5e1014" />
    <path d="M867 654L960 600 1035 620 924 691Z" fill="url(#plate)" />
    <path d="M867 654L924 690 1035 620V627L924 697 867 661Z" fill="#5e1014" />
    <path d="M907 612H970V638L907 668Z" fill="#2c0406" />
    <path d="M892 600L907 606V674L892 666Z" fill="url(#post)" />
    <path d="M922 615H929V661L922 658Z" fill="url(#post)" />

    {/* level bridle nozzle */}
    <ellipse cx="585" cy="261" rx="16" ry="26" transform="rotate(22 585 261)" fill="url(#flangeN)" />
    <path d="M590 246Q600 258 622 262L604 280Q592 272 582 276 578 262 590 246Z" fill="url(#pipeN)" />
    <g fill="#04101c"><ellipse cx="597" cy="244" rx="3" ry="5" transform="rotate(25 597 244)" /><ellipse cx="577" cy="257" rx="3" ry="5" transform="rotate(25 577 257)" /><ellipse cx="578" cy="279" rx="3" ry="4.500" transform="rotate(35 578 279)" /></g>

    {/* left head and channel */}
    <path d="M686 266C668 251 640 251 626 259 600 270 567 308 567 350 567 385 577 402 593 413L640 400 690 290Z" fill="url(#headL)" />
    <path d="M577 313C570 328 567 338 567 350 567 378 573 396 583 406 572 380 574 345 588 308 600 284 612 270 632 257 610 266 590 286 577 313Z" fill="#035c08" />
    <path d="M673 258L730 295 660 455 593 413C581 395 583 355 596 323 608 293 632 264 673 258Z" fill="url(#channel)" stroke="#ff9c70" strokeWidth=".7" />

    {/* lower nozzle */}
    <path d="M645 462C638 475 640 485 650 492 657 497 668 498 676 496L660 470Z" fill="#1c6ee0" /><path d="M641 468L650 474 643 478Z" fill="#04101c" />

    {/* body flanges */}
    <path d="M790 297C777 280 748 278 722 291 676 314 641 375 641 420 641 460 652 494 680 507L720 420Z" fill="url(#purple)" />
    <path d="M722 291C676 314 641 375 641 420 641 460 652 488 664 494 644 468 642 420 664 372 680 338 705 309 736 296 745 290 770 287 782 291 770 279 745 281 722 291Z" fill="#5c00ec" />
    <path d="M789 297C750 282 704 316 676 364 650 414 648 480 680 507L700 440Z" fill="#12002c" />
    <path d="M800 302C790 288 765 284 738 299 700 320 656 390 656 440 656 478 670 508 700 513L760 400Z" fill="url(#tan)" stroke="#f0c890" strokeWidth=".7" />
    <path d="M703 513C678 512 665 490 665 450 665 405 700 338 742 306 765 290 790 290 804 306 813 318 817 332 817 350L760 440 704 513Z" fill="#3e2710" stroke="#e0b070" strokeWidth=".7" />

    {/* left saddle posts */}
    <path d="M718 486H768V533L718 551Z" fill="#2c0406" />
    <path d="M704 480L719 486V555L704 549Z" fill="url(#post)" />
    <path d="M733 500H741V542L733 539Z" fill="url(#post)" />

    {/* main shell */}
    <path d="M704 483C690 472 683 456 683 438 683 396 712 346 746 328 762 320 780 320 793 331L817 346 1012 472 932 628Z" fill="url(#shell)" />
    <path d="M704 483C690 472 683 456 683 438 683 396 712 346 746 328 762 320 780 320 793 331" fill="none" stroke="#ff8a58" strokeWidth=".8" />

    {/* right head */}
    <path d="M930 625C912 600 914 560 933 527 950 497 980 470 1007 473 1033 480 1048 505 1048 535 1046 585 1016 630 985 639 960 644 943 638 930 625Z" fill="url(#dome)" />
    <path d="M930 625C912 600 914 560 933 527 945 505 962 487 980 476L993 480C965 490 948 510 938 532 924 562 922 600 935 629Z" fill="#0d6c16" opacity=".8" />
    <path d="M930 625C912 600 914 560 933 527 945 505 962 487 980 476" fill="none" stroke="#f0a050" strokeWidth=".8" />

    {/* top nozzle */}
    <path d="M656 258V290C656 297 684 297 684 290V258Z" fill="url(#stub)" />
    <ellipse cx="669.5" cy="244" rx="29" ry="20" fill="#0c3f88" />
    <ellipse cx="669.5" cy="240" rx="29" ry="19" fill="url(#flangeT)" />
    <ellipse cx="669.5" cy="238" rx="15" ry="11" fill="url(#stub)" />
    <g fill="#04101c"><ellipse cx="669" cy="224" rx="5" ry="3" /><ellipse cx="646" cy="239" rx="5" ry="3.400" /><ellipse cx="693" cy="239" rx="5" ry="3.400" /><ellipse cx="669" cy="255" rx="5.400" ry="3.600" /></g>

    {/* vapour dome and return pipe */}
    <text x="918" y="344" fill="#14148c">VAPOUR DOME</text>
    <path d="M935 425L1002 464 996 496 926 444Z" fill="#200500" opacity=".35" />
    <path d="M900 360V446C902 458 934 458 936 446V360Z" fill="url(#column)" />
    <path d="M900 366V348C902 328 934 328 936 348V366C932 373 904 373 900 366Z" fill="url(#cap)" />
    <path d="M900 350C904 358 932 358 936 348V366C932 373 904 373 900 366Z" fill="#00400a" opacity=".75" />
    <path d="M916 329H919V338H916Z" fill="#3c86e8" />
    <path d="M932 427L998 466 994 490 926 443Q926 432 932 427Z" fill="url(#pipe)" />
    <path d="M1000 468C1008 462 1018 464 1019 473 1020 482 1014 498 1003 499 994 499 993 490 996 480Z" fill="#0a2aa4" />
    <g fill="#02061c"><ellipse cx="1002" cy="479" rx="3.400" ry="4.600" /><ellipse cx="1013" cy="473" rx="3.400" ry="4" /><ellipse cx="1002" cy="494" rx="3.400" ry="4" /><ellipse cx="1014" cy="487" rx="3.400" ry="4" /></g>

    {/* right-hand nozzles */}
    <Flange x={1072} y={571} label="N4" />
    <Flange x={1005} y={613} label="N3" />

    {/* leader lines */}
    <Lines c="#1fc4c8" d="M637 165V266M669 187V246M713 214V297M845 298V399M967 375V475" />
    <Lines c="#b8202a" d="M631 165V260M698 204V303M642 443V512M973 380V455M984 637V699" />
    <path d="M505 414L566 377" stroke="#a02028" strokeDasharray="14 4 3 4" />

    <g fill="#14148c">
      <text x="606" y="166">LEFT HEAD</text>
      <text x="610" y="187">LEFT CHANNE SHELL</text>
      <text x="645" y="215">LEFT CHANNEL FLANGE</text>
      <text x="481" y="260">LEVEL BRIDLE</text>
      <text x="507" y="350">New Nozzl</text>
      <text x="813" y="298">MAIN SHELL</text>
      <text x="914" y="326">BLEED OFF</text>
      <text x="1018" y="496">CO2 RETURN</text>
      <text x="668" y="237">N1</text>
    </g>
    <g fill="#8c1c24">
      <text x="488" y="428">Datum Line</text>
      <text x="602" y="523" xmlSpace="preserve">50.00 mm.  [20]</text>
      <text x="698" y="584" xmlSpace="preserve">493.58 mm.  [40]</text>
      <text x="928" y="378" xmlSpace="preserve">1543.58 mm.  [70]</text>
    </g>

    {/* axis triad */}
    <path d="M493 612A24 24 0 0 1 513 651Q493 660 473 651A24 24 0 0 1 493 612Z" fill="#d8d8d8" />
    <circle cx="493" cy="637" r="15" fill="#b4b4b4" />
    <path d="M493 636L475 624M493 636L511 624M493 636V654" stroke="#e4e4e4" />
    <path d="M493 636V608" stroke="#12a02a" strokeWidth="5" /><path d="M487 612L493 601 499 612Z" fill="#18b830" />
    <path d="M493 636L477 646" stroke="#b01818" strokeWidth="5" /><path d="M471 648L474 641 481 650Z" fill="#d01818" /><circle cx="474" cy="647" r="4" fill="#b81414" />
    <path d="M493 636L513 647" stroke="#1414b8" strokeWidth="5" /><path d="M518 651L511 641 508 650Z" fill="#1414c8" /><circle cx="514" cy="648" r="4" fill="#1414b8" />
    <g fontSize="14"><text x="489" y="597" fill="#12b02a">Y</text><text x="460" y="653" fill="#c01818">Z</text><text x="518" y="653" fill="#14148c">X</text></g>
  </svg>
);

/* ---------- right tool strip ---------- */

const cube = (face: string) => (
  <><path d="M2 5l3-3h9v9l-3 3H2z" fill="#c6cdd6" stroke={N} strokeWidth="1.3" /><path d="M2 5h9v9M11 5l3-3M5 2v9h9M5 11l-3 3" fill="none" stroke={N} /><path d={face} fill="#5b7391" stroke={N} /></>
);
const iso = (face: string) => (
  <><path d="M8 1l6 5v5l-6 4-6-4V6z" fill="#dce3ea" stroke={N} /><path d="M2 6l6 5 6-5M8 11v4" stroke={N} fill="none" /><path d={face} fill="#8597ad" stroke={N} /></>
);

const toolGroups: [string, React.ReactNode][][] = [
  [
    ["Front", cube("M2 5h9v9H2z")],
    ["Back", cube("M5 2h9v9H5z")],
    ["Top", cube("M2 5l3-3h9l-3 3z")],
    ["Bottom", cube("M2 14l3-3h9l-3 3z")],
    ["Left", cube("M2 5l3-3v9l-3 3z")],
    ["Right", cube("M11 5l3-3v9l-3 3z")],
    ["Isometric 1", iso("M2 6l6 5v4l-6-4z")],
    ["Isometric 2", iso("M8 1l6 5-6 5-6-5z")],
    ["Isometric 3", iso("M14 6l-6 5v4l6-4z")],
    ["Isometric 4", iso("M8 1l6 5-6 5-6-5z")],
    ["Zoom window", <><circle cx="9" cy="5" r="3.500" fill="#eee" stroke={N} strokeWidth="1.4" /><path d="M11 8l4 5" stroke={N} strokeWidth="2.4" /><path d="M4 8v7M1 12h7" stroke={N} strokeWidth="1.4" /></>],
    ["Zoom fit", <><circle cx="9" cy="5" r="3.500" fill="#eee" stroke="#555" strokeWidth="1.4" /><path d="M11 8l4 5" stroke="#555" strokeWidth="2.4" /><path d="M2 9h5v5H2z" fill="#fff" stroke="#777" /></>],
  ],
  [
    ["Rotate", <><path d="M3 11c-2-4 1-8 5-8M13 5c2 4-1 8-5 8" stroke="#222" strokeWidth="2.200" fill="none" /><path d="M8 0l5 3-5 4zM8 9l-5 4 5 3z" fill="#222" /></>],
    ["Spin", <><path d="M8 0v16M5 13l3 3 3-3" stroke="#2c8f3a" strokeWidth="2" fill="none" /><path d="M1 8c0-4 13-5 14-1M1 8c1 5 11 5 13 2" stroke="#2a62b4" strokeWidth="2.400" fill="none" /></>],
    ["Pan", <><path d="M0 6l4 2-3-6 5 4-1-5 4 6 1 3 1-1v3l-3 3C4 15 1 11 0 6z" fill="#e6b4a4" stroke="#a0453c" strokeWidth=".8" /><path d="M13 0v6M10 3h6M13 10l2 2v3h-4v-3z" stroke={N} fill={N} /></>],
    ["Zoom", <path d="M1 4h7M7 11h8M11 7v8" stroke={N} strokeWidth="2.200" />],
  ],
  [
    ["Select area", <><path d="M1 1h10M1 1v12M1 13h6" stroke="#333" strokeDasharray="1 1.500" /><path d="M6 2l8 8H10l2 5-2 1-2-5-3 3z" fill={N} /></>],
    ["Select", <path d="M4 1l9 9H9l2 5-2 1-2-5-3 3z" fill={N} />],
    ["Show dimensions", <><path d="M1 1v14h14" stroke="#b81c24" strokeWidth="1.800" fill="none" /><path d="M4 1h3v3h3V1h4v12h-4v-4H7v4H4z" fill="#2c5c4c" stroke="#112" /></>],
  ],
  [
    ["Cut plane", <><path d="M1 8l5-3h8v5l-5 4H1z" fill="#eee" stroke="#333" /><path d="M4 9L11 1v6L4 15z" fill="#d83434" stroke="#7c1014" /></>],
    ["Transparency", <path d="M3 3c0-2 10-2 10 0v10c0 2-10 2-10 0zM3 3c0 2 10 2 10 0M6 9h4" fill="#ddd" stroke="#777" />],
    ["Attach", <path d="M3 1v14M3 4h8v7H3M13 2v11" fill="#eee" stroke="#222" strokeWidth="1.600" />],
    ["Flip", <path d="M12 2C0 3 0 13 12 12M8 8l5 4-5 3" fill="none" stroke="#333" strokeWidth="1.800" />],
  ],
];

const Tools = () => (
  <ToolStrip>
    <svg width="14" height="3" viewBox="0 0 14 3" aria-hidden="true"><path d="M0 1h2M4 1h2M8 1h2M12 1h2" stroke="#222" strokeWidth="2" /></svg>
    {toolGroups.map((g, i) => (
      <React.Fragment key={i}>
        {i > 0 && <ToolRule />}
        {g.map(([name, art]) => (
          <ToolButton key={name} aria-label={name} $active={name === "Rotate"}>
            <svg width="15" height="15" viewBox="0 0 16 16" aria-hidden="true">{art}</svg>
          </ToolButton>
        ))}
      </React.Fragment>
    ))}
    <PlainButton aria-label="More tools">
      <svg width="8" height="7" viewBox="0 0 8 7"><path d="M1 0v7M3 0l4 3.500-4 3.500z" stroke="#222" fill="#222" strokeWidth=".8" /></svg>
    </PlainButton>
  </ToolStrip>
);

const statusItems: [string, number][] = [
  ["El# 1 of 6", 60], ["Fr: 0 to: 50 mm.", 87], ["Left", 36], ["Tr: 1.74", 49], ["Mawp: 6.7", 65],
  ["MAPnc: 6.7", 68], ["", 8], ["EMawp: 3.4", 72], ["SPLM", 33],
];

export default function App() {
  return (
    <Window>
      <GlobalStyle />
      <Defs />
      <Chrome>
        <TitleBar>
          <QuickAccess>
            <svg width="16" height="17" viewBox="0 0 16 17" aria-label="PV Elite"><path d="M0 0h16v17H0z" fill="#16a5a5" /><path d="M0 10C4 4 9 1 16 1" stroke="#5fd0cc" fill="none" /><text x="4" y="15" fontSize="8" fontFamily="Liberation Sans, sans-serif" fill="#053c40">PV</text></svg>
            <svg width="14" height="14" viewBox="0 0 14 14" aria-hidden="true"><path d="M.5 0v14" stroke="#999" /><path d="M6 4h7" stroke="#222" /><path d="M6 6h7l-3.500 4z" fill="#222" /></svg>
          </QuickAccess>
          <Title>PVElite - [C:\Program Files (x86)\Intergraph CAS\PVElite 2016\Examples_backup\PD55ExchangerFloatFlohead.pvdb]</Title>
          <WindowButtons>
            <PlainButton aria-label="Minimize"><svg width="11" height="11"><path d="M1 6h9" stroke="#222" /></svg></PlainButton>
            <PlainButton aria-label="Restore"><svg width="11" height="11"><path d="M1.500 3.500h6v7h-6zM3.500 3V1.500h6v7H8" fill="none" stroke="#222" /></svg></PlainButton>
            <PlainButton aria-label="Close"><svg width="11" height="11"><path d="M1 1l9 9M10 1l-9 9" stroke="#222" /></svg></PlainButton>
          </WindowButtons>
        </TitleBar>
        <TabBar>
          <FileTab>File</FileTab>
          <RibbonTab $active $width={53}>Home</RibbonTab>
          <RibbonTab $width={52}>Tools</RibbonTab>
          <RibbonTab $width={51}>View</RibbonTab>
          <RibbonTab $width={40}>3D</RibbonTab>
          <RibbonTab $width={83}>Diagnostics</RibbonTab>
          <RibbonTab $width={44}>ESL</RibbonTab>
          <RibbonTab $width={48}>Help</RibbonTab>
          <TabBarEnd>
            <PlainButton aria-label="Collapse ribbon"><svg width="9" height="8" viewBox="0 0 9 8"><path d="M1 4l3.500-3L8 4M1 7l3.500-3L8 7" stroke="#fff" strokeWidth="1.3" fill="none" /></svg></PlainButton>
            <button>Options</button>
            <PlainButton aria-label="Help"><svg width="16" height="16" viewBox="0 0 16 16"><circle cx="8" cy="8" r="7.500" fill="url(#help)" /><text x="5" y="12" fontSize="11" fontWeight="700" fontFamily="Liberation Sans, sans-serif" fill="#fff">?</text></svg></PlainButton>
            <svg width="75" height="22" viewBox="0 0 75 22" aria-label="Intergraph"><path d="M0 17C12 6 26 1 42 8" fill="none" stroke="#aaa" strokeWidth="1.200" /><text x="6" y="18" fontSize="10" fontWeight="700" fontFamily="Liberation Sans, sans-serif" fill="#b0b0b0">INTERGRAPH</text></svg>
          </TabBarEnd>
        </TabBar>
      </Chrome>
      <Home />
      <WorkArea>
        <GeneralInput />
        <ViewPanel>
          <Canvas><Scene /></Canvas>
          <ViewTabs>
            <ViewTab>2D View</ViewTab>
            <ViewTab $active>3D View</ViewTab>
          </ViewTabs>
        </ViewPanel>
        <Tools />
      </WorkArea>
      <StatusBar>
        <span>Ell Head Weight Cor: 299.766 N.&nbsp; Vol Cor: 26184.6 Cm.</span>
        <StatusItems>
          {statusItems.map(([t, w], i) => <StatusItem key={i} $width={w}>{t}</StatusItem>)}
        </StatusItems>
      </StatusBar>
    </Window>
  );
}
